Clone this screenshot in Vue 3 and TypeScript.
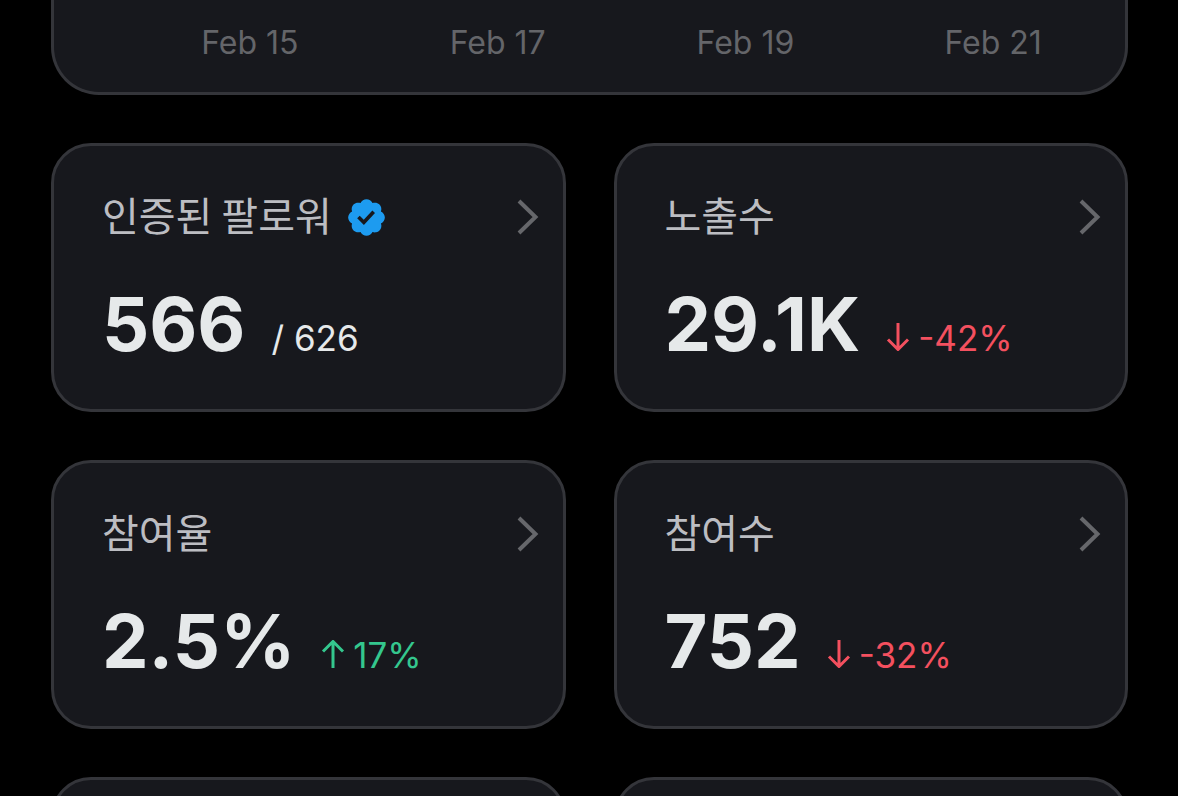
<script setup lang="ts">
interface Metric {
  label: string
  value: string
  verified?: boolean
  total?: string
  trend?: 'up' | 'down'
  change?: string
}

const dates: string[] = ['Feb 15', 'Feb 17', 'Feb 19', 'Feb 21']

const metrics: Metric[] = [
  { label: '인증된 팔로워', value: '566', verified: true, total: '/ 626' },
  { label: '노출수', value: '29.1K', trend: 'down', change: '-42%' },
  { label: '참여율', value: '2.5%', trend: 'up', change: '17%' },
  { label: '참여수', value: '752', trend: 'down', change: '-32%' },
]
</script>

<template>
  <main class="page">
    <section class="chart">
      <div class="axis">
        <span v-for="date in dates" :key="date">{{ date }}</span>
      </div>
    </section>
    <section class="grid">
      <a v-for="m in metrics" :key="m.label" class="card" href="#">
        <div class="head">
          <h2 class="label">{{ m.label }}</h2>
          <svg v-if="m.verified" class="badge" viewBox="0 0 22 22" aria-hidden="true">
            <path d="M20.396 11c-.018-.646-.215-1.275-.57-1.816-.354-.54-.852-.972-1.438-1.246.223-.607.27-1.264.14-1.897-.131-.634-.437-1.218-.882-1.687-.47-.445-1.053-.75-1.687-.882-.633-.13-1.29-.083-1.897.14-.273-.587-.704-1.086-1.245-1.44S11.647 1.62 11 1.604c-.646.017-1.273.213-1.813.568s-.969.854-1.24 1.44c-.608-.223-1.267-.272-1.902-.14-.635.13-1.22.436-1.69.882-.445.47-.749 1.055-.878 1.688-.13.633-.08 1.29.144 1.896-.587.274-1.087.705-1.443 1.245-.356.54-.555 1.17-.574 1.817.02.647.218 1.276.574 1.817.356.54.856.972 1.443 1.245-.224.606-.274 1.263-.144 1.896.13.634.433 1.218.877 1.688.47.443 1.054.747 1.687.878.633.132 1.29.084 1.897-.136.274.586.705 1.084 1.246 1.439.54.354 1.17.551 1.816.569.647-.016 1.276-.213 1.817-.567s.972-.854 1.245-1.44c.604.239 1.266.296 1.903.164.636-.132 1.22-.447 1.68-.907.46-.46.776-1.044.908-1.681s.075-1.299-.165-1.903c.586-.274 1.084-.705 1.439-1.246.354-.54.551-1.17.569-1.816zM9.662 14.85l-3.429-3.428 1.293-1.302 2.072 2.072 4.4-4.794 1.347 1.246z" />
          </svg>
          <svg class="chevron" viewBox="0 0 22 36" aria-hidden="true">
            <path d="M2 2L18.500 18L2 34" />
          </svg>
        </div>
        <div class="figures">
          <strong class="value">{{ m.value }}</strong>
          <span v-if="m.total" class="total">{{ m.total }}</span>
          <span v-if="m.trend" class="change" :class="m.trend">
            <svg class="arrow" viewBox="0 0 24 28" aria-hidden="true">
              <path v-if="m.trend === 'down'" d="M12 0V26.500M2 16.500L12 26.500L22 16.500" />
              <path v-else d="M12 28V1.500M2 11.500L12 1.500L22 11.500" />
            </svg>
            <span>{{ m.change }}</span>
          </span>
        </div>
      </a>
      <div class="card"></div>
      <div class="card"></div>
    </section>
  </main>
</template>

<style>
body {
  margin: 0;
  background: #000;
}
</style>

<style scoped>
.page {
  box-sizing: border-box;
  height: 100vh;
  overflow: hidden;
  padding: 0 50px 0 51px;
  background: #000;
  font-family: Inter, "Noto Sans CJK KR", sans-serif;
}
.chart {
  border: 3px solid #34353a;
  border-top: 0;
  border-radius: 0 0 48px 48px;
  background: #17181d;
  padding: 23px 8px 29px 72px;
}
.axis {
  display: grid;
  grid-template-columns: repeat(4, 1fr);
  text-align: center;
  font-size: 32px;
  line-height: 40px;
  color: #646569;
}
.grid {
  display: grid;
  grid-template-columns: 1fr 1fr;
  gap: 48px;
  margin-top: 48px;
}
.card {
  box-sizing: border-box;
  min-height: 269px;
  border: 3px solid #34353a;
  border-radius: 40px;
  background: #17181d;
  padding: 42px 24px 0 48px;
  color: #e6e9ea;
  text-decoration: none;
}
.head {
  display: flex;
  align-items: center;
  height: 58px;
}
.label {
  margin: 0;
  padding-bottom: 6px;
  font-family: "Noto Sans CJK KR", sans-serif;
  font-size: 40px;
  line-height: 52px;
  font-weight: 400;
  color: #bcbdc2;
}
.badge {
  width: 43px;
  height: 43px;
  margin-left: 13px;
  fill: #1d9bf0;
}
.chevron {
  width: 22px;
  height: 36px;
  margin-left: auto;
  fill: none;
  stroke: #66676b;
  stroke-width: 4;
}
.figures {
  display: flex;
  align-items: baseline;
  gap: 26px;
  margin-top: 33px;
}
.value {
  font-size: 74px;
  line-height: 90px;
  font-weight: 700;
}
.total,
.change {
  font-size: 35px;
  line-height: 44px;
}
.change {
  display: flex;
  align-items: baseline;
  gap: 8px;
}
.arrow {
  width: 24px;
  height: 28px;
  fill: none;
  stroke: currentColor;
  stroke-width: 3;
}
.down {
  color: #f4505f;
}
.up {
  color: #34c78e;
}
</style>
